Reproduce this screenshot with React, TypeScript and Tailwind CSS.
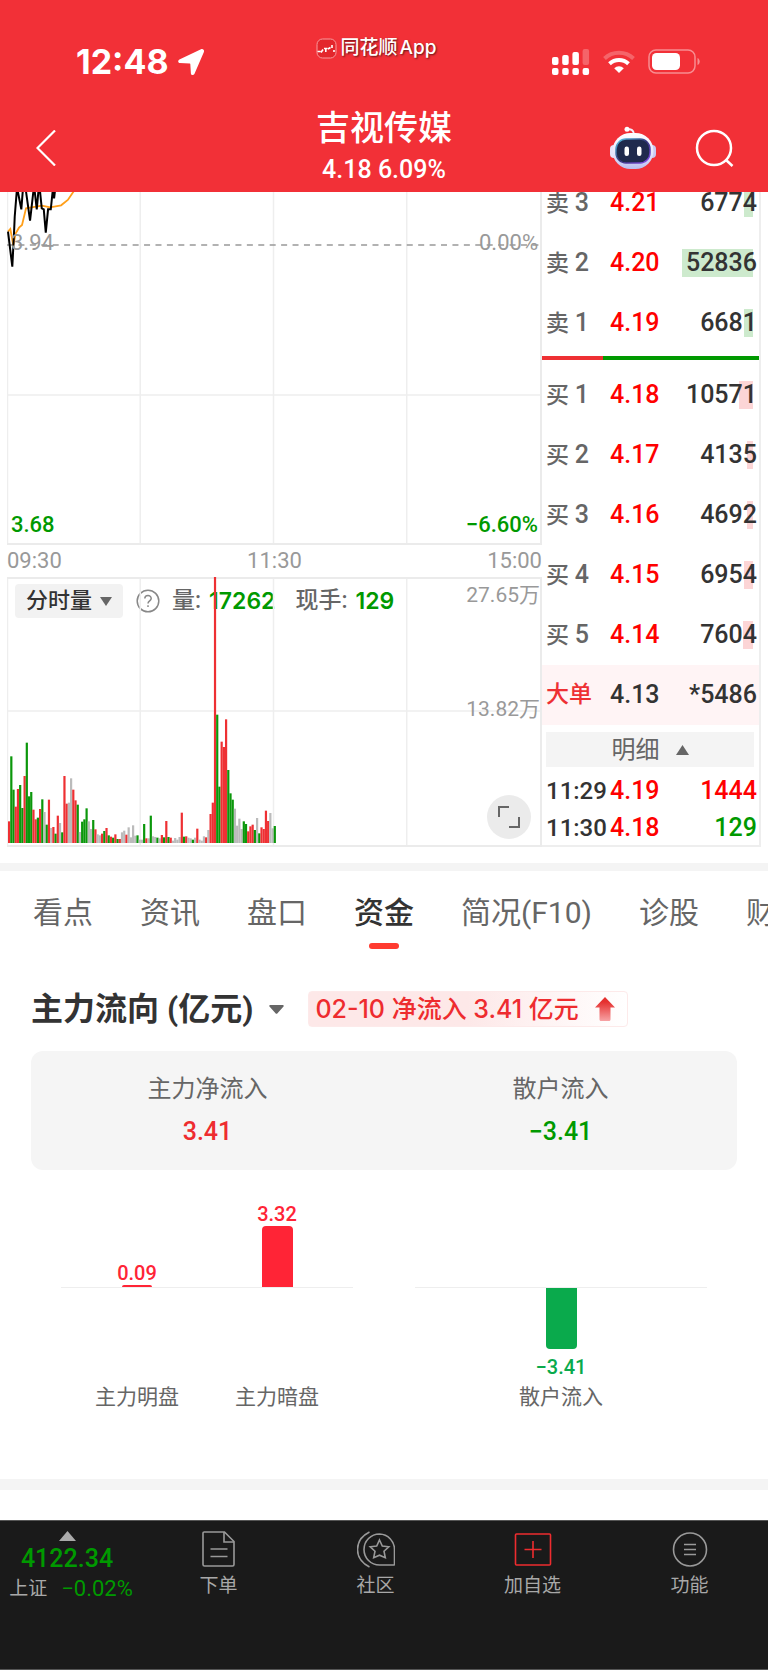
import { useState } from 'react'

const ASKS = [
  { label: '卖', level: 3, price: '4.21', volume: '6774', depth: 9 },
  { label: '卖', level: 2, price: '4.20', volume: '52836', depth: 71 },
  { label: '卖', level: 1, price: '4.19', volume: '6681', depth: 9 },
]

const BIDS = [
  { label: '买', level: 1, price: '4.18', volume: '10571', depth: 14 },
  { label: '买', level: 2, price: '4.17', volume: '4135', depth: 6 },
  { label: '买', level: 3, price: '4.16', volume: '4692', depth: 6 },
  { label: '买', level: 4, price: '4.15', volume: '6954', depth: 9 },
  { label: '买', level: 5, price: '4.14', volume: '7604', depth: 10 },
]

const TRADES = [
  { time: '11:29', price: '4.19', volume: '1444', up: true },
  { time: '11:30', price: '4.18', volume: '129', up: false },
]

const TABS = ['看点', '资讯', '盘口', '资金', '简况(F10)', '诊股', '财务']

// one entry per minute: r = up, g = down, x = flat
const VOLUMES =
  'r65 g260 g160 r109 r162 g174 g105 r201 g301 g140 g153 r100 r71 g76 r102 g131 x93 g55 r130 x45 r48 g28 r82 x60 g32 ' +
  'r201 r118 x121 x194 r160 r128 g115 x33 g64 g71 g104 x65 x42 g69 r41 x26 x23 r28 g36 r45 g23 r19 g16 r26 g12 ' +
  'r12 x32 x37 r25 x47 x17 x53 x22 g23 x10 x10 g57 r14 x14 g82 x20 x18 g16 x14 r24 g17 r66 g18 r16 x7 ' +
  'x15 x10 x18 r91 g19 r20 x16 x14 g10 x16 r43 x10 x7 x20 r17 x39 r87 r121 r798 g385 g169 r304 r288 r371 g219 ' +
  'g149 g130 x103 x52 x73 x42 g65 g57 r35 r50 r55 g39 x75 g29 r47 r42 r97 r66 x90 x44 g51'

const BAR_COLORS: Record<string, string> = { r: '#ee3033', g: '#0b970b', x: '#bbbbbb' }

const PRICE_LINE = '1,58.7 5.3,93.7 7,60.3 7.7,43.7 9.7,18.7 10.3,16 14.3,36.3 15.7,18.7 17,10 19,18.7 23,47.7 26.3,18.7 27.7,18.7 29.7,36.3 31.3,18.7 33,18.7 34.7,35.3 36.7,36.3 38.7,59.7 41,36.3 43.7,36.3 45.7,17 47,25.3 48,17 52,0'
const AVERAGE_LINE = '1,58.7 3.3,56 6.3,72 8.7,60.3 12,54.7 15,52 19,35.3 34.7,32.7 39.7,33.7 43,34.3 54,32.3 60.7,27 66.3,18.7 80,0'

function Header() {
  return (
    <header className="sticky top-0 z-10 bg-[#f23037] text-white">
      <div className="grid grid-cols-3 items-center h-24">
        <div className="flex items-center gap-2 pl-19 pt-7">
          <span className="font-['Inter',sans-serif] text-[34px] leading-9 font-bold">12:48</span>
          <svg width="28" height="28" viewBox="0 0 28 28" fill="currentColor">
            <path d="M24 1.2 2.4 11.4C.6 12.3.9 14.8 2.8 15l10 .5c.3 0 .5.2.5.5l.6 9.4c.2 2 2.6 2.3 3.5.6L26.9 4c.8-1.9-1-3.6-2.9-2.8Z" />
          </svg>
        </div>
        <div className="flex items-center justify-center gap-1 pr-4">
          <svg width="21" height="21" viewBox="0 0 21 21" fill="none">
            <rect x="1" y="1" width="19" height="19" rx="5.5" fill="#e3262c" stroke="#f79a9d" />
            <path d="M1.5 13.5h3M5 14.5l2-3M8 10.5h3.5M9.8 10.5v3.5M12 11l2.5-1.5M16 7v3M18 12v2" stroke="#fff" strokeWidth="1.6" />
          </svg>
          <span className="text-[19px] leading-7 font-medium whitespace-nowrap [text-shadow:1px_1px_2px_rgba(0,0,0,0.6)]">
            同花顺<span className="ml-0.5 font-['Inter',sans-serif]">App</span>
          </span>
        </div>
        <div className="flex items-center justify-end gap-3 pr-17 pt-7">
          <svg width="38" height="28" viewBox="0 0 38 28" fill="currentColor">
            <rect x="0" y="9" width="6.5" height="8" rx="2" />
            <rect x="10.2" y="7" width="6.5" height="10" rx="2" />
            <rect x="20.4" y="4" width="6.5" height="13" rx="2" />
            <rect x="30.6" y="1" width="6.5" height="16" rx="2" opacity="0.25" />
            <rect x="0" y="20" width="6.5" height="7" rx="2" />
            <rect x="10.2" y="20" width="6.5" height="7" rx="2" />
            <rect x="20.4" y="20" width="6.5" height="7" rx="2" />
            <rect x="30.6" y="20" width="6.5" height="7" rx="2" />
          </svg>
          <svg width="34" height="26" viewBox="0 0 34 26" fill="none" stroke="currentColor" strokeWidth="4">
            <path d="M2.5 9.5a21 21 0 0 1 29 0" opacity="0.25" />
            <path d="M7.5 14.8a14 14 0 0 1 19 0" />
            <path d="M12.2 19.2a7 7 0 0 1 9.6 0L17 24Z" fill="currentColor" stroke="none" />
          </svg>
          <svg width="52" height="26" viewBox="0 0 52 26">
            <rect x="1" y="1" width="46" height="23" rx="7" fill="none" stroke="#fff" strokeOpacity="0.45" strokeWidth="1.5" />
            <rect x="4" y="4" width="28" height="17" rx="4.5" fill="#fff" />
            <path d="M49.5 9v7c1.4-.5 2.2-2 2.2-3.5S50.9 9.5 49.5 9Z" fill="#fff" opacity="0.45" />
          </svg>
        </div>
      </div>
      <div className="grid grid-cols-3 items-center pt-2.5 pb-0.5">
        <div className="pl-9">
          <button type="button" aria-label="返回" className="block">
            <svg width="20" height="36" viewBox="0 0 20 36" fill="none" stroke="currentColor" strokeWidth="2.2">
              <path d="M19 .5 1.5 18 19 35.5" />
            </svg>
          </button>
        </div>
        <div className="text-center font-medium">
          <h1 className="text-[34px] leading-11">吉视传媒</h1>
          <p className="text-[25px] leading-10">4.18 6.09%</p>
        </div>
        <div className="flex items-center justify-end gap-[38px] pr-[34px]">
          <button type="button" aria-label="智能助手">
            <svg width="46" height="44" viewBox="0 0 46 44">
              <defs>
                <linearGradient id="shell" x1="0" y1="0" x2="0" y2="1">
                  <stop offset="0" stopColor="#fff" />
                  <stop offset="0.6" stopColor="#e4e4fb" />
                  <stop offset="1" stopColor="#b9bdf0" />
                </linearGradient>
                <linearGradient id="rim" x1="0" y1="0" x2="1" y2="1">
                  <stop offset="0" stopColor="#58c8e8" />
                  <stop offset="0.5" stopColor="#34357a" />
                  <stop offset="1" stopColor="#8a4cf0" />
                </linearGradient>
              </defs>
              <path d="M17 3.5c4-1 7 1 7 5" fill="none" stroke="#f3eefc" strokeWidth="2" />
              <circle cx="17" cy="3.2" r="2.5" fill="#fff" />
              <rect x="0" y="19" width="8" height="13" rx="4" fill="#e4e4fb" />
              <rect x="38" y="19" width="8" height="13" rx="4" fill="#c9caf3" />
              <rect x="2.5" y="7" width="41" height="36" rx="18" fill="url(#shell)" />
              <rect x="6" y="13" width="34" height="24" rx="10" fill="#1f2a4d" stroke="url(#rim)" strokeWidth="1.5" />
              <rect x="14.5" y="20.5" width="4.5" height="9.5" rx="2.2" fill="#fff" />
              <rect x="27" y="20.5" width="4.5" height="9.5" rx="2.2" fill="#fff" />
            </svg>
          </button>
          <button type="button" aria-label="搜索">
            <svg width="40" height="40" viewBox="0 0 40 40" fill="none" stroke="currentColor" strokeWidth="2.5">
              <circle cx="20" cy="20" r="17" />
              <path d="m31.5 31.5 7 6.5" />
            </svg>
          </button>
        </div>
      </div>
    </header>
  )
}

function PriceChart() {
  return (
    <div className="relative h-[372px] text-[22px] leading-7 text-[#999]">
      <svg className="block w-full h-full" viewBox="0 0 534 372" preserveAspectRatio="none" fill="none">
        <path d="M.5 0V372M133 0V372M266 0V372M399 0V372M0 222H534" stroke="#eeeeee" strokeWidth="1.5" />
        <path d="M0 371H534M533 0V372" stroke="#ebebeb" strokeWidth="2" />
        <path d="M0 72H534" stroke="#999" strokeWidth="1.4" strokeDasharray="6 5.4" />
        <polyline points={AVERAGE_LINE} stroke="#ff9f1a" strokeWidth="1.8" />
        <polyline points={PRICE_LINE} stroke="#000" strokeWidth="2" />
      </svg>
      <span className="absolute left-1 top-14">3.94</span>
      <span className="absolute right-1 top-14">0.00%</span>
      <span className="absolute left-1 bottom-1.5 text-[#009900] font-medium">3.68</span>
      <span className="absolute right-1 bottom-1.5 text-[#009900] font-medium">−6.60%</span>
    </div>
  )
}

function VolumeChart() {
  return (
    <div className="relative h-[270px] text-[22px] leading-7">
      <div className="flex items-center pl-2 pt-[7px]">
        <button type="button" className="flex items-center gap-2 h-[34px] px-[11px] rounded bg-[#f2f2f2] text-[#333] font-medium">
          分时量
          <svg width="12" height="9" viewBox="0 0 12 9" fill="#666"><path d="M0 0h12L6 9Z" /></svg>
        </button>
        <button type="button" aria-label="说明" className="ml-[13px]">
          <svg width="24" height="24" viewBox="0 0 24 24" fill="none" stroke="#888" strokeWidth="1.5">
            <circle cx="12" cy="12" r="10.8" />
            <path d="M8.8 9.6c0-4 6.4-4 6.4-.2 0 2.4-3.2 2.4-3.2 5" />
            <path d="M12 16.2v1.8" />
          </svg>
        </button>
        <div className="flex text-[23px] font-medium text-[#666]">
          <span className="ml-3">量:</span>
          <span className="ml-2 font-['Inter',sans-serif] font-semibold text-[#009900]">17262</span>
          <span className="ml-5">现手:</span>
          <span className="ml-2 font-['Inter',sans-serif] font-semibold text-[#009900]">129</span>
        </div>
      </div>
      <svg className="absolute inset-0 w-full h-full pointer-events-none" viewBox="0 0 534 270" preserveAspectRatio="none" fill="none">
        <path d="M.5 0V270M133 0V270M266 0V270M399 0V270M0 134H534" stroke="#eeeeee" strokeWidth="1.5" />
        <path d="M0 1H534M0 269H534M533 0V270" stroke="#ebebeb" strokeWidth="2" />
        {VOLUMES.split(' ').map((bar, i) => {
          const height = Number(bar.slice(1)) / 3
          return <rect key={i} x={1 + i * 2.21} y={266 - height} width="2.2" height={height} fill={BAR_COLORS[bar[0]]} />
        })}
      </svg>
      <span className="absolute right-0.5 top-1 text-[21px] text-[#999]">27.65万</span>
      <span className="absolute right-0.5 top-[118px] text-[21px] text-[#999]">13.82万</span>
      <button type="button" aria-label="全屏" className="absolute right-[11px] bottom-2 size-11 rounded-full bg-[#ebebeb] flex items-center justify-center">
        <svg width="24" height="24" viewBox="0 0 24 24" fill="none" stroke="#666" strokeWidth="2">
          <path d="M2 12V2h10M22 12v10H12" />
        </svg>
      </button>
    </div>
  )
}

function OrderTable({ rows, depthClass, name }: { rows: typeof ASKS; depthClass: string; name: string }) {
  return (
    <table className="w-full text-[25px] leading-8 font-medium" aria-label={name}>
      <tbody>
        {rows.map(row => (
          <tr key={row.level} className="h-15">
            <th scope="row" className="w-17 pl-1 text-left text-[23px] font-medium text-[#666] whitespace-nowrap">
              {row.label} <span className="text-[25px]">{row.level}</span>
            </th>
            <td className="text-[#ff0000]">{row.price}</td>
            <td className="relative pr-0.5 text-right text-[#333]">
              <span className={`absolute right-1.5 top-4 h-7 ${depthClass}`} style={{ width: row.depth }} />
              <span className="relative">{row.volume}</span>
            </td>
          </tr>
        ))}
      </tbody>
    </table>
  )
}

function OrderBook() {
  return (
    <section className="w-[219px] border-r-2 border-b-2 border-[#eeeeee]">
      <OrderTable rows={ASKS} depthClass="bg-[#cdeacd]" name="卖盘" />
      <div className="flex h-1 mt-[3px] mb-[5px]">
        <div className="bg-[#ee3033]" style={{ width: '28%' }} />
        <div className="flex-1 bg-[#009900]" />
      </div>
      <OrderTable rows={BIDS} depthClass="bg-[#fcd5d6]" name="买盘" />
      <div className="flex items-center h-15 pl-1 pr-0.5 bg-[#fff4f5] text-[25px] font-medium text-[#333]">
        <span className="w-16 text-[23px] text-[#ee3033]">大单</span>
        <span>4.13</span>
        <span className="ml-auto">*5486</span>
      </div>
      <button type="button" className="flex items-center justify-center gap-4 w-[208px] h-[35px] mt-[7px] ml-1 mb-1 bg-[#f4f4f4] text-2xl text-[#666]">
        明细
        <svg width="13" height="10" viewBox="0 0 13 10" fill="#666"><path d="M0 10h13L6.5 0Z" /></svg>
      </button>
      <table className="w-full text-[25px] leading-8 font-medium" aria-label="成交明细">
        <tbody>
          {TRADES.map(trade => (
            <tr key={trade.time} className="h-[37px]">
              <td className="w-17 pl-1 pt-0.5 text-[#333]"><span className="text-2xl">{trade.time}</span></td>
              <td className="pt-0.5 text-[#ff0000]">{trade.price}</td>
              <td className={`pr-0.5 pt-0.5 text-right ${trade.up ? 'text-[#ff0000]' : 'text-[#009900]'}`}>{trade.volume}</td>
            </tr>
          ))}
        </tbody>
      </table>
    </section>
  )
}

function FundFlow() {
  return (
    <section className="px-[31px] pt-9">
      <div className="flex items-center">
        <button type="button" className="flex items-center gap-4 text-[32px] leading-12 font-bold text-[#333]">
          主力流向 (亿元)
          <svg width="15" height="9" viewBox="0 0 15 9" fill="#666"><path d="M1.5 0h12c1.2 0 1.6 1 .8 1.8L8.5 8.3c-.6.7-1.4.7-2 0L.7 1.8C-.1 1 .3 0 1.5 0Z" /></svg>
        </button>
        <a href="#flow" className="ml-6 flex items-center gap-4 h-9 pl-1.5 pr-3 rounded border border-[#fdeaea] bg-linear-to-r from-[#fde8e8] from-50% to-white font-['Inter','Noto_Sans_CJK_SC',sans-serif] text-[25px] leading-8 font-medium text-[#ee2c2f] whitespace-nowrap">
          02-10 净流入 3.41 亿元
          <svg width="20" height="24" viewBox="0 0 20 24">
            <defs>
              <linearGradient id="up" x1="0" y1="0" x2="0" y2="1">
                <stop offset="0.2" stopColor="#e5302f" />
                <stop offset="1" stopColor="#f7a3a5" />
              </linearGradient>
            </defs>
            <path d="M10 0 20 10.5H15.5V22.5c0 .8-.5 1.5-1.5 1.5H6c-1 0-1.5-.7-1.5-1.5V10.5H0Z" fill="url(#up)" />
          </svg>
        </a>
      </div>

      <div className="grid grid-cols-2 mt-[18px] py-5 rounded-xl bg-[#f5f5f5] text-center">
        <div>
          <p className="text-2xl leading-9 text-[#666]">主力净流入</p>
          <p className="mt-[7px] text-[25px] leading-9 font-medium text-[#ee2c2f]">3.41</p>
        </div>
        <div>
          <p className="text-2xl leading-9 text-[#666]">散户流入</p>
          <p className="mt-[7px] text-[25px] leading-9 font-medium text-[#009900]">−3.41</p>
        </div>
      </div>

      <div className="grid grid-cols-2 gap-15.5 px-7.5 pt-[29px] text-[21px] leading-7 text-[#666] text-center">
        <div>
          <div className="flex items-end h-[89px] px-1.5 border-b border-[#eeeeee] text-xl leading-6 font-medium text-[#ff2436]">
            <div className="flex-1 flex flex-col items-center">
              0.09
              <div className="w-[30px] h-0.5 rounded-t-sm bg-[#ff2436]" />
            </div>
            <div className="flex-1 flex flex-col items-center">
              3.32
              <div className="w-[31px] h-[61px] rounded-t bg-[#ff2436]" />
            </div>
          </div>
          <div className="flex px-1.5 pt-[95px]">
            <span className="flex-1">主力明盘</span>
            <span className="flex-1">主力暗盘</span>
          </div>
        </div>
        <div>
          <div className="h-[89px] border-b border-[#eeeeee]" />
          <div className="flex flex-col items-center h-[95px]">
            <div className="w-[31px] h-[61px] rounded-b bg-[#0aaa4c]" />
            <span className="mt-1 text-xl leading-7 font-medium text-[#0aaa4c]">−3.41</span>
          </div>
          <span>散户流入</span>
        </div>
      </div>
    </section>
  )
}

function BottomItem({ label, children }: { label: string; children: React.ReactNode }) {
  return (
    <button type="button" className="flex-1 flex flex-col items-center pt-2.5 text-[19px] leading-7 text-[#a8a8a8]">
      <svg className="mb-1" width="38" height="37" viewBox="0 0 38 37" fill="none" stroke="#999" strokeWidth="1.6">
        {children}
      </svg>
      {label}
    </button>
  )
}

function BottomBar() {
  return (
    <nav className="flex items-start h-[150px] bg-[#1a1a1a] border-t border-b border-[#555]">
      <button type="button" className="w-[140px] pt-2.5 pr-1.5 flex flex-col items-center text-[#009900]">
        <svg width="17" height="10" viewBox="0 0 17 10" fill="#aaa"><path d="M0 10h17L8.5 0Z" /></svg>
        <span className="mt-0.5 text-[25px] leading-8 font-medium">4122.34</span>
        <span className="flex items-center gap-3.5 pl-2 text-[22px] leading-7 whitespace-nowrap">
          <span className="text-[19px] text-[#a8a8a8]">上证</span>
          −0.02%
        </span>
      </button>
      <BottomItem label="下单">
        <path d="M3.5 1h21L34 10.500V33.5q0 1.5-1.5 1.5h-28Q3 35 3 33.5V2Q3 1 4 1Z" />
        <path d="M24 1v10h10M10.5 18h17M10.5 25.5h17" />
      </BottomItem>
      <BottomItem label="社区">
        <path d="M12.5 1C-3.5 9-3.5 28 12.5 36" />
        <path d="M22.5 3A15.5 15.5 0 1 0 22.5 34H36.5q1 0 1-1V18.5A15.500 15.500 0 0 0 22.5 3Z" />
        <path d="m22.5 9 2.8 6 6.5.8-4.8 4.4 1.3 6.5-5.8-2.5-5.8 2.5 1.3-6.5-4.8-4.4 6.5-.8Z" />
      </BottomItem>
      <BottomItem label="加自选">
        <rect x="1.5" y="3" width="35" height="31" rx="1" stroke="#ee2c2f" />
        <path d="M19 10v17M10.5 18.5h17" stroke="#ee2c2f" />
      </BottomItem>
      <BottomItem label="功能">
        <circle cx="19" cy="18.5" r="16.5" />
        <path d="M13 13.5h12M13 18.5h12M13 23.5h12" />
      </BottomItem>
    </nav>
  )
}

export default function App() {
  const [tab, setTab] = useState('资金')

  return (
    <div className="min-h-screen flex flex-col overflow-x-clip bg-white font-['Roboto','Noto_Sans_CJK_SC',sans-serif]">
      <Header />

      <main className="flex-1 -mt-[19px]">
        <div className="flex pl-[7px] pr-[7px]">
          <section className="flex-1 min-w-0">
            <PriceChart />
            <div className="flex justify-between h-8 items-center text-[22px] leading-7 text-[#999]">
              <span>09:30</span>
              <span>11:30</span>
              <span>15:00</span>
            </div>
            <VolumeChart />
          </section>
          <OrderBook />
        </div>

        <div className="h-2 mt-4 bg-[#f4f4f4]" />

        <div role="tablist" className="flex gap-[47px] pl-[33px] pt-5 overflow-hidden text-[30px] leading-11 text-[#666] whitespace-nowrap">
          {TABS.map(name => (
            <button
              key={name}
              type="button"
              role="tab"
              aria-selected={tab === name}
              onClick={() => setTab(name)}
              className={`shrink-0 flex flex-col items-center ${tab === name ? 'font-medium text-[#333]' : ''}`}
            >
              {name}
              {tab === name && <span className="mt-2 w-[30px] h-1.5 rounded-full bg-[#ff3b30]" />}
            </button>
          ))}
        </div>

        <FundFlow />

        <div className="h-[11px] mt-17 mb-7.5 bg-[#f4f4f4]" />
      </main>

      <BottomBar />
    </div>
  )
}
